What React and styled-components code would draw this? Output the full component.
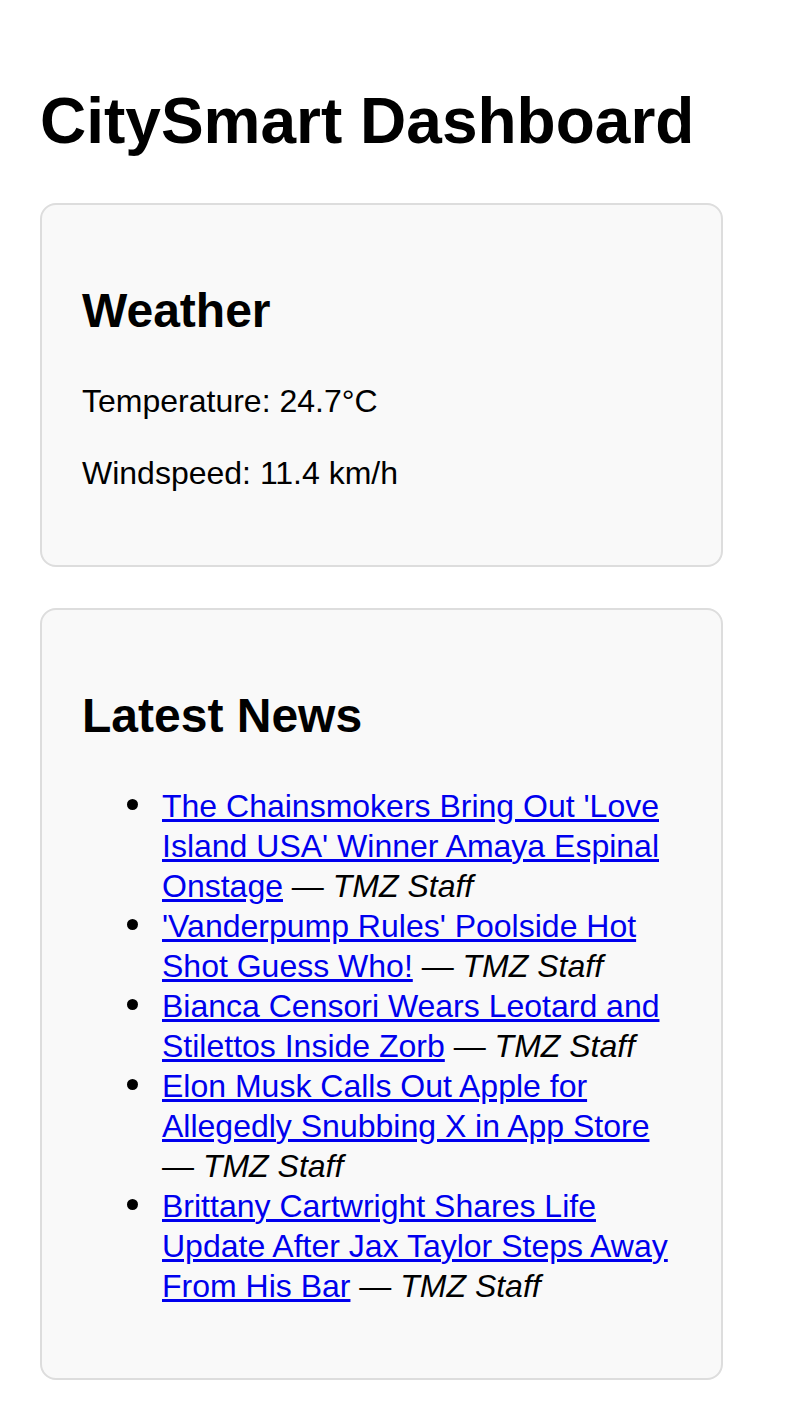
import React from "react";
import styled, { createGlobalStyle } from "styled-components";

const GlobalStyle = createGlobalStyle`
  html, body {
    margin: 0;
    padding: 0;
    background: #ffffff;
  }
  body {
    font-family: "Liberation Sans", Arial, Helvetica, sans-serif;
    color: #000000;
    font-size: 32px;
    line-height: 40px;
  }
  * { box-sizing: border-box; }
`;

const Page = styled.div`
  padding: 0 40px 40px 40px;
  display: flex;
  flex-direction: column;
  align-items: flex-start;
`;

const Title = styled.h1`
  font-size: 64px;
  font-weight: 700;
  line-height: 1.15;
  margin: 85px 0 44px 0;
`;

const Card = styled.section`
  width: 683px;
  background: #f9f9f9;
  border: 2px solid #dddddd;
  border-radius: 16px;
  padding: 40px;
  margin-bottom: 41px;
  display: flow-root;
`;

const CardTitle = styled.h2`
  font-size: 48px;
  font-weight: 700;
  line-height: 60px;
  margin: 36px 0 40px 0;
`;

const Stat = styled.p`
  margin: 32px 0;
  font-size: 32px;
  line-height: 40px;
  &:first-of-type { margin-top: 0; }
`;

const NewsList = styled.ul`
  margin: 0 0 32px 0;
  padding-left: 80px;
  list-style: none;
`;

const NewsItem = styled.li`
  position: relative;
  font-size: 32px;
  line-height: 40px;

  &::before {
    content: "";
    position: absolute;
    left: -35px;
    top: 13px;
    width: 11px;
    height: 11px;
    border-radius: 50%;
    background: #000000;
  }
`;

const NewsLink = styled.a`
  color: #0000ee;
  text-decoration: underline;
`;

const Source = styled.em`
  font-style: italic;
`;

const news = [
  "The Chainsmokers Bring Out 'Love Island USA' Winner Amaya Espinal Onstage",
  "'Vanderpump Rules' Poolside Hot Shot Guess Who!",
  "Bianca Censori Wears Leotard and Stilettos Inside Zorb",
  "Elon Musk Calls Out Apple for Allegedly Snubbing X in App Store",
  "Brittany Cartwright Shares Life Update After Jax Taylor Steps Away From His Bar",
];

export default function App() {
  return (
    <>
      <GlobalStyle />
      <Page>
        <Title>CitySmart Dashboard</Title>
        <Card>
          <CardTitle>Weather</CardTitle>
          <Stat>Temperature: 24.7°C</Stat>
          <Stat>Windspeed: 11.4 km/h</Stat>
        </Card>
        <Card>
          <CardTitle>Latest News</CardTitle>
          <NewsList>
            {news.map((t) => (
              <NewsItem key={t}>
                <NewsLink href="#">{t}</NewsLink> — <Source>TMZ Staff</Source>
              </NewsItem>
            ))}
          </NewsList>
        </Card>
      </Page>
    </>
  );
}
